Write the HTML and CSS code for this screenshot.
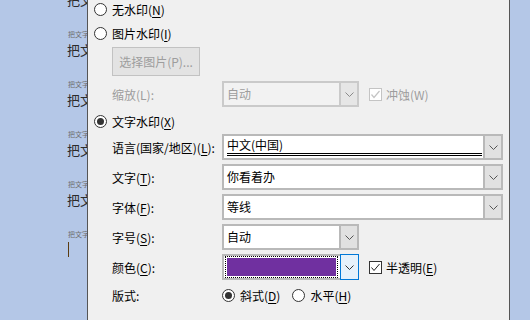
FILE: index.html
```html
<!DOCTYPE html>
<html lang="zh-CN">
<head>
    <meta charset="UTF-8">
    <title>水印</title>
    <link rel="stylesheet" href="styles.css">
</head>
<body>
<div class="page">
    <div class="doc">
        <div class="para"><div class="big">把文字水印设置</div><div class="tiny">把文字水印设置</div></div>
        <div class="para"><div class="big">把文字水印设置</div><div class="tiny">把文字水印设置</div></div>
        <div class="para"><div class="big">把文字水印设置</div><div class="tiny">把文字水印设置</div></div>
        <div class="para"><div class="big">把文字水印设置</div><div class="tiny">把文字水印设置</div></div>
        <div class="para"><div class="big">把文字水印设置</div><div class="tiny">把文字水印设置</div></div>
        <div class="caret"></div>
    </div>

    <div class="dialog">
        <div class="opt first"><span class="radio"></span>无水印(<u>N</u>)</div>
        <div class="opt second"><span class="radio"></span>图片水印(<u>I</u>)</div>
        <div class="btn">选择图片(P)...</div>
        <div class="field scale">
            <span class="label off">缩放(L):</span>
            <div class="combo short disabled">
                <span class="value">自动</span>
                <span class="drop"><svg width="9" height="5" viewBox="0 0 9 5"><polyline points="0.5,0.5 4.5,4.5 8.5,0.5" fill="none" stroke="#8a8a8a"/></svg></span>
            </div>
            <span class="check off"><span class="box"><svg width="11" height="11" viewBox="0 0 11 11"><polyline points="1.5,5.5 4,8.5 9.5,2" fill="none" stroke="#c4c4c4" stroke-width="1.2"/></svg></span>冲蚀(W)</span>
        </div>
        <div class="opt text-wm"><span class="radio on"></span>文字水印(<u>X</u>)</div>
        <div class="field lang">
            <span class="label">语言(国家/地区)(<u>L</u>):</span>
            <div class="combo long">
                <span class="value"><span class="sel">中文(中国)</span></span>
                <span class="drop"><svg width="9" height="5" viewBox="0 0 9 5"><polyline points="0.5,0.5 4.5,4.5 8.5,0.5" fill="none" stroke="#555"/></svg></span>
            </div>
        </div>
        <div class="field">
            <span class="label">文字(<u>T</u>):</span>
            <div class="combo long">
                <span class="value">你看着办</span>
                <span class="drop"><svg width="9" height="5" viewBox="0 0 9 5"><polyline points="0.5,0.5 4.5,4.5 8.5,0.5" fill="none" stroke="#555"/></svg></span>
            </div>
        </div>
        <div class="field">
            <span class="label">字体(<u>F</u>):</span>
            <div class="combo long">
                <span class="value">等线</span>
                <span class="drop"><svg width="9" height="5" viewBox="0 0 9 5"><polyline points="0.5,0.5 4.5,4.5 8.5,0.5" fill="none" stroke="#555"/></svg></span>
            </div>
        </div>
        <div class="field">
            <span class="label">字号(<u>S</u>):</span>
            <div class="combo short">
                <span class="value">自动</span>
                <span class="drop"><svg width="9" height="5" viewBox="0 0 9 5"><polyline points="0.5,0.5 4.5,4.5 8.5,0.5" fill="none" stroke="#555"/></svg></span>
            </div>
        </div>
        <div class="field">
            <span class="label">颜色(<u>C</u>):</span>
            <div class="combo short">
                <span class="swatch"><span class="fill"></span></span>
                <span class="drop focus"><svg width="9" height="5" viewBox="0 0 9 5"><polyline points="0.5,0.5 4.5,4.5 8.5,0.5" fill="none" stroke="#333"/></svg></span>
            </div>
            <span class="check"><span class="box"><svg width="11" height="11" viewBox="0 0 11 11"><polyline points="1.5,5.5 4,8.5 9.5,2" fill="none" stroke="#222" stroke-width="1"/></svg></span>半透明(<u>E</u>)</span>
        </div>
        <div class="field layout">
            <span class="label">版式:</span>
            <span class="pick"><span class="radio on"></span>斜式(<u>D</u>)</span>
            <span class="pick"><span class="radio"></span>水平(<u>H</u>)</span>
        </div>
    </div>

    <div class="side"></div>
</div>
</body>
</html>
```

FILE: styles.css
```css
body{
    margin: 0;
    font-family: "Noto Sans CJK SC", "Noto Sans", sans-serif;
    font-size: 12px;
    color: #000;
}
.page{
    display: flex;
    width: 530px;
    height: 320px;
    background-color: #b4c7e7;
    overflow: hidden;
}
.doc{
    width: 87px;
    flex: none;
    padding-left: 67px;
    box-sizing: border-box;
    overflow: hidden;
    white-space: nowrap;
}
.para{
    height: 50px;
}
.para:first-child{
    margin-top: -8px;
}
.big{
    height: 16px;
    line-height: 16px;
    font-size: 13px;
    color: #2b2b2b;
}
.tiny{
    margin-top: 22px;
    height: 8px;
    line-height: 8px;
    font-size: 7px;
    color: #6e6e6e;
    padding-left: 1px;
}
.caret{
    margin: 0 0 0 1px;
    width: 1px;
    height: 15px;
    background-color: #5b3c12;
}
.dialog{
    width: 423px;
    flex: none;
    box-sizing: border-box;
    border-left: 1px solid #555;
    border-right: 1px solid #555;
    background-color: #f0f0f0;
    padding-left: 6px;
}
.side{
    flex: 1;
}
.opt{
    display: flex;
    align-items: center;
    height: 18px;
}
.second{
    margin-top: 6px;
}
.text-wm{
    margin-top: 5px;
}
.radio{
    display: inline-block;
    position: relative;
    width: 13px;
    height: 13px;
    box-sizing: border-box;
    border: 1px solid #333;
    border-radius: 50%;
    background-color: #fff;
    margin-right: 5px;
    flex: none;
}
.radio.on::after{
    content: "";
    position: absolute;
    left: 2px;
    top: 2px;
    width: 7px;
    height: 7px;
    border-radius: 50%;
    background-color: #333;
}
.btn{
    margin: 5px 0 0 18px;
    width: 88px;
    height: 29px;
    box-sizing: border-box;
    border: 1px solid #c2c2c2;
    background-color: #e3e3e3;
    color: #9d9d9d;
    line-height: 27px;
    text-align: center;
}
.field{
    display: flex;
    align-items: center;
    height: 26px;
    margin: 4px 0 0 18px;
}
.scale{
    margin-top: 5px;
}
.layout{
    height: 18px;
    margin-top: 6px;
}
.label{
    width: 110px;
    flex: none;
}
.off{
    color: #9d9d9d;
}
.combo{
    display: flex;
    height: 26px;
    box-sizing: border-box;
    border: 2px solid #b9b9b9;
    background-color: #fff;
}
.long{
    width: 281px;
}
.short{
    width: 137px;
}
.value{
    flex: 1;
    padding-left: 3px;
    line-height: 21px;
}
.sel{
    display: block;
    margin-right: 1px;
    line-height: 17px;
    border-bottom: 3px double #000;
}
.drop{
    width: 16px;
    flex: none;
    display: flex;
    align-items: center;
    justify-content: center;
    background-color: #e1e1e1;
    border-left: 2px solid #b9b9b9;
}
.disabled{
    border-color: #cacaca;
    background-color: #f2f2f2;
    color: #9d9d9d;
}
.disabled .drop{
    border-left-color: #cacaca;
    background-color: #e6e6e6;
}
.swatch{
    flex: 1;
    margin: 0 2px 0 1px;
    border: 1px dotted #000;
    padding: 1px;
    display: flex;
}
.fill{
    flex: 1;
    background-color: #7030a0;
}
.drop.focus{
    margin: -2px -2px -2px 0;
    width: 17px;
    border: 1px solid #0078d7;
    background-color: #e5f1fb;
}
.check{
    display: flex;
    align-items: center;
    margin-left: 10px;
}
.box{
    width: 13px;
    height: 13px;
    box-sizing: border-box;
    border: 1px solid #333;
    background-color: #fff;
    margin-right: 4px;
    display: flex;
    align-items: center;
    justify-content: center;
}
.check.off .box{
    border-color: #c4c4c4;
}
.pick{
    display: flex;
    align-items: center;
    margin-right: 12px;
}
u{
    text-decoration-thickness: 1px;
    text-underline-offset: 2px;
}
```
